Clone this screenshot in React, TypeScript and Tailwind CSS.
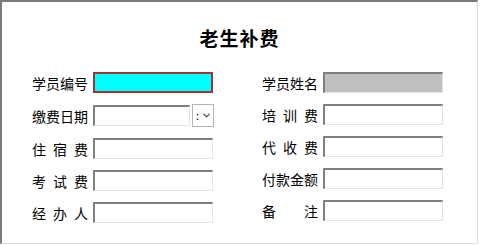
import { ChevronDown } from 'lucide-react'

const font = { fontFamily: '"Noto Sans CJK SC", "Noto Sans", sans-serif' }

function Label({ text, spread }: { text: string; spread?: boolean }) {
  if (!spread) return <span className="w-[56px] shrink-0 text-[14px] leading-none text-black whitespace-nowrap">{text}</span>
  return (
    <span className="w-[56px] shrink-0 flex justify-between text-[14px] leading-none text-black">
      {text.split('').map((c, i) => <span key={i}>{c}</span>)}
    </span>
  )
}

function Box({ kind }: { kind?: 'focus' | 'gray' }) {
  if (kind === 'focus') return <div className="w-[120px] h-[21px] bg-[#00ffff] border-2 border-[#a83232]" />
  return (
    <div className={`w-[120px] h-[21px] border-t-2 border-l-2 border-b border-r border-t-[#7f7f7f] border-l-[#7f7f7f] border-b-[#e3e3e3] border-r-[#e3e3e3] ${kind === 'gray' ? 'bg-[#c0c0c0]' : 'bg-white'}`} />
  )
}

function Field({ label, spread, kind }: { label: string; spread?: boolean; kind?: 'focus' | 'gray' }) {
  return (
    <div className="flex items-center gap-[5px]">
      <Label text={label} spread={spread} />
      <Box kind={kind} />
    </div>
  )
}

function DateField() {
  return (
    <div className="flex items-center gap-[5px]">
      <Label text="缴费日期" />
      <div className="flex items-center gap-[2px]">
        <div className="w-[97px] h-[21px] border-t-2 border-l-2 border-b border-r border-t-[#7f7f7f] border-l-[#7f7f7f] border-b-[#e3e3e3] border-r-[#e3e3e3] bg-white" />
        <div className="w-[22px] h-[23px] border border-[#b4b4b4] bg-white flex items-center pl-[3px] gap-[2px]">
          <span className="text-[11px] leading-none text-black">:</span>
          <ChevronDown size={11} strokeWidth={3} className="text-[#505050]" />
        </div>
      </div>
    </div>
  )
}

export default function App() {
  return (
    <div className="w-[478px] h-[244px] bg-white border-t-2 border-l-2 border-b border-r border-t-[#7a7a7a] border-l-[#7a7a7a] border-b-[#dedede] border-r-[#dedede]" style={font}>
      <div className="h-[70px] flex items-center justify-center">
        <h1 className="text-[19px] font-bold tracking-[1px] text-black leading-none">老生补费</h1>
      </div>
      <div className="flex pl-[30px] gap-[48px]">
        <div className="flex flex-col gap-[11px]">
          <Field label="学员编号" kind="focus" />
          <DateField />
          <Field label="住宿费" spread />
          <Field label="考试费" spread />
          <Field label="经办人" spread />
        </div>
        <div className="flex flex-col gap-[11px]">
          <Field label="学员姓名" kind="gray" />
          <Field label="培训费" spread />
          <Field label="代收费" spread />
          <Field label="付款金额" />
          <Field label="备注" spread />
        </div>
      </div>
    </div>
  )
}
